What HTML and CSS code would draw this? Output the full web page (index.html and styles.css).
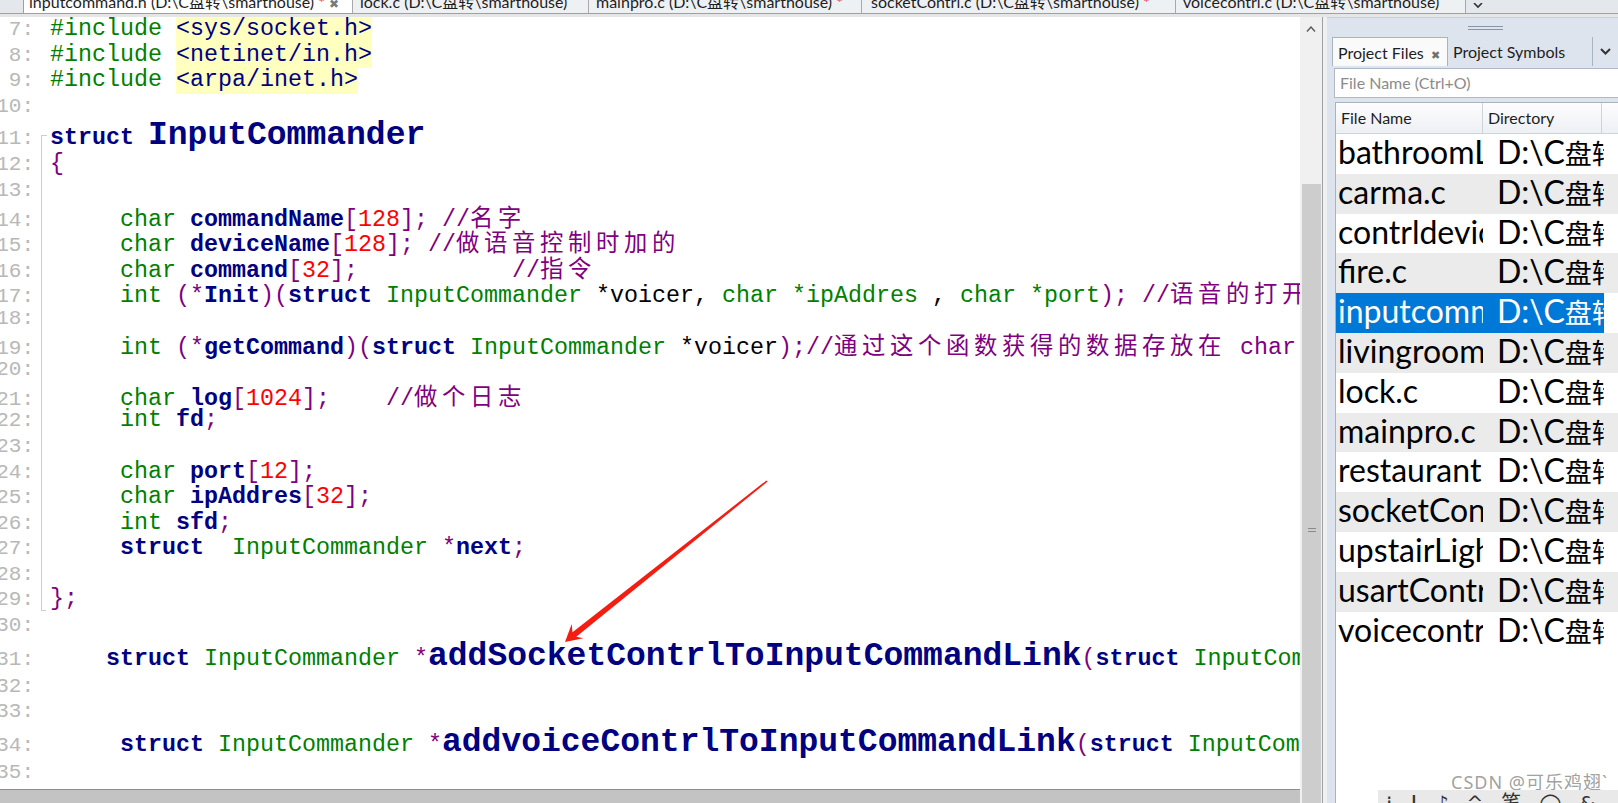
FILE: index.html
```html
<!DOCTYPE html>
<html lang="zh">
<head>
    <meta charset="UTF-8">
    <meta name="viewport" content="width=device-width, initial-scale=1.0">
    <title>inputcommand.h - smarthouse</title>
    <link rel="stylesheet" href="styles.css">
</head>
<body>
    <div class="tabbar">
        <div class="tab active"><span class="lbl">inputcommand.h (D:\C盘转\smarthouse) <span class="mod">*</span> <span class="close">✖</span></span></div>
        <div class="tab"><span class="lbl">lock.c (D:\C盘转\smarthouse)</span></div>
        <div class="tab"><span class="lbl">mainpro.c (D:\C盘转\smarthouse) <span class="mod">*</span></span></div>
        <div class="tab"><span class="lbl">socketContrl.c (D:\C盘转\smarthouse) <span class="mod">*</span></span></div>
        <div class="tab"><span class="lbl">voicecontrl.c (D:\C盘转\smarthouse)</span></div>
        <div class="tab-menu"><svg width="10" height="6" viewBox="0 0 10 6"><polyline points="1,0 5,4 9,0" fill="none" stroke="#333" stroke-width="1.6"/></svg></div>
    </div>
    <div class="tabline"></div>

    <div class="main">
        <div class="editor">
            <div class="code">
                <div class="line"><span class="num">7:</span><span class="fold"></span><span class="src"><span class="pp">#include</span> <span class="hd">&lt;sys/socket.h&gt;</span></span></div>
                <div class="line"><span class="num">8:</span><span class="fold"></span><span class="src"><span class="pp">#include</span> <span class="hd">&lt;netinet/in.h&gt;</span></span></div>
                <div class="line"><span class="num">9:</span><span class="fold"></span><span class="src"><span class="pp">#include</span> <span class="hd">&lt;arpa/inet.h&gt;</span></span></div>
                <div class="line"><span class="num">10:</span><span class="fold"></span><span class="src"> </span></div>
                <div class="line big11"><span class="num">11:</span><span class="fold top"></span><span class="src"><span class="kw">struct</span> <span class="fn">InputCommander</span></span></div>
                <div class="line"><span class="num">12:</span><span class="fold mid"></span><span class="src"><span class="pu">{</span></span></div>
                <div class="line"><span class="num">13:</span><span class="fold mid"></span><span class="src"> </span></div>
                <div class="line"><span class="num">14:</span><span class="fold mid"></span><span class="src">     <span class="ty">char</span> <span class="id">commandName</span><span class="pu">[</span><span class="nu">128</span><span class="pu">];</span> <span class="cm">//<span class="zh">名字</span></span></span></div>
                <div class="line"><span class="num">15:</span><span class="fold mid"></span><span class="src">     <span class="ty">char</span> <span class="id">deviceName</span><span class="pu">[</span><span class="nu">128</span><span class="pu">];</span> <span class="cm">//<span class="zh">做语音控制时加的</span></span></span></div>
                <div class="line"><span class="num">16:</span><span class="fold mid"></span><span class="src">     <span class="ty">char</span> <span class="id">command</span><span class="pu">[</span><span class="nu">32</span><span class="pu">];</span>           <span class="cm">//<span class="zh">指令</span></span></span></div>
                <div class="line"><span class="num">17:</span><span class="fold mid"></span><span class="src">     <span class="ty">int</span> <span class="pu">(*</span><span class="id">Init</span><span class="pu">)(</span><span class="kw">struct</span> <span class="tn">InputCommander</span> *voicer, <span class="ty">char</span> <span class="tn">*ipAddres</span> , <span class="ty">char</span> <span class="tn">*port</span><span class="pu">);</span> <span class="cm">//<span class="zh">语音的打开</span></span></span></div>
                <div class="line"><span class="num">18:</span><span class="fold mid"></span><span class="src"> </span></div>
                <div class="line"><span class="num">19:</span><span class="fold mid"></span><span class="src">     <span class="ty">int</span> <span class="pu">(*</span><span class="id">getCommand</span><span class="pu">)(</span><span class="kw">struct</span> <span class="tn">InputCommander</span> *voicer<span class="pu">);</span><span class="cm">//<span class="zh">通过这个函数获得的数据存放在</span> char</span></span></div>
                <div class="line"><span class="num">20:</span><span class="fold mid"></span><span class="src"> </span></div>
                <div class="line"><span class="num">21:</span><span class="fold mid"></span><span class="src">     <span class="ty">char</span> <span class="id">log</span><span class="pu">[</span><span class="nu">1024</span><span class="pu">];</span>    <span class="cm">//<span class="zh">做个日志</span></span></span></div>
                <div class="line"><span class="num">22:</span><span class="fold mid"></span><span class="src">     <span class="ty">int</span> <span class="id">fd</span><span class="pu">;</span></span></div>
                <div class="line"><span class="num">23:</span><span class="fold mid"></span><span class="src"> </span></div>
                <div class="line"><span class="num">24:</span><span class="fold mid"></span><span class="src">     <span class="ty">char</span> <span class="id">port</span><span class="pu">[</span><span class="nu">12</span><span class="pu">];</span></span></div>
                <div class="line"><span class="num">25:</span><span class="fold mid"></span><span class="src">     <span class="ty">char</span> <span class="id">ipAddres</span><span class="pu">[</span><span class="nu">32</span><span class="pu">];</span></span></div>
                <div class="line"><span class="num">26:</span><span class="fold mid"></span><span class="src">     <span class="ty">int</span> <span class="id">sfd</span><span class="pu">;</span></span></div>
                <div class="line"><span class="num">27:</span><span class="fold mid"></span><span class="src">     <span class="kw">struct</span>  <span class="tn">InputCommander</span> <span class="pu">*</span><span class="id">next</span><span class="pu">;</span></span></div>
                <div class="line"><span class="num">28:</span><span class="fold mid"></span><span class="src"> </span></div>
                <div class="line"><span class="num">29:</span><span class="fold end"></span><span class="src"><span class="pu">};</span></span></div>
                <div class="line"><span class="num">30:</span><span class="fold"></span><span class="src"> </span></div>
                <div class="line big"><span class="num">31:</span><span class="fold"></span><span class="src">    <span class="kw">struct</span> <span class="tn">InputCommander</span> <span class="pu">*</span><span class="fn">addSocketContrlToInputCommandLink</span><span class="pu">(</span><span class="kw">struct</span> <span class="tn">InputCommander</span> *phead<span class="pu">);</span></span></div>
                <div class="line"><span class="num">32:</span><span class="fold"></span><span class="src"> </span></div>
                <div class="line"><span class="num">33:</span><span class="fold"></span><span class="src"> </span></div>
                <div class="line big"><span class="num">34:</span><span class="fold"></span><span class="src">     <span class="kw">struct</span> <span class="tn">InputCommander</span> <span class="pu">*</span><span class="fn">addvoiceContrlToInputCommandLink</span><span class="pu">(</span><span class="kw">struct</span> <span class="tn">InputCommander</span> *phead<span class="pu">);</span></span></div>
                <div class="line"><span class="num">35:</span><span class="fold"></span><span class="src"> </span></div>
            </div>
            <div class="vscroll">
                <div class="vs-up"><svg width="10" height="6" viewBox="0 0 10 6"><polyline points="1,5.5 5,1 9,5.5" fill="none" stroke="#5a5a5a" stroke-width="1.4"/></svg></div>
                <div class="vs-thumb"><span class="grip-line"></span><span class="grip-line"></span></div>
            </div>
            <div class="hscroll"></div>
        </div>

        <div class="splitter"></div>

        <div class="panel">
            <div class="panel-grip"><span></span><span></span></div>
            <div class="ptabs">
                <div class="ptab on">Project Files <span class="ptab-x">✖</span></div>
                <div class="ptab">Project Symbols</div>
                <div class="ptab-drop"><svg width="11" height="7" viewBox="0 0 11 7"><polyline points="1,1 5.5,5.5 10,1" fill="none" stroke="#333" stroke-width="2"/></svg></div>
            </div>
            <div class="search">File Name (Ctrl+O)</div>
            <div class="list">
                <div class="lhead"><div class="c1">File Name</div><div class="c2">Directory</div><div class="c3"></div></div>
                <div class="row"><div class="c1">bathroomLight.c</div><div class="c2">D:\C<span class="dz">盘转</span>\smarthouse</div></div>
                <div class="row alt"><div class="c1">carma.c</div><div class="c2">D:\C<span class="dz">盘转</span>\smarthouse</div></div>
                <div class="row"><div class="c1">contrldevices.h</div><div class="c2">D:\C<span class="dz">盘转</span>\smarthouse</div></div>
                <div class="row alt"><div class="c1">fire.c</div><div class="c2">D:\C<span class="dz">盘转</span>\smarthouse</div></div>
                <div class="row sel"><div class="c1">inputcommand.h</div><div class="c2">D:\C<span class="dz">盘转</span>\smarthouse</div></div>
                <div class="row alt"><div class="c1">livingroomLight.c</div><div class="c2">D:\C<span class="dz">盘转</span>\smarthouse</div></div>
                <div class="row"><div class="c1">lock.c</div><div class="c2">D:\C<span class="dz">盘转</span>\smarthouse</div></div>
                <div class="row alt"><div class="c1">mainpro.c</div><div class="c2">D:\C<span class="dz">盘转</span>\smarthouse</div></div>
                <div class="row"><div class="c1">restaurantLight.c</div><div class="c2">D:\C<span class="dz">盘转</span>\smarthouse</div></div>
                <div class="row alt"><div class="c1">socketContrl.c</div><div class="c2">D:\C<span class="dz">盘转</span>\smarthouse</div></div>
                <div class="row"><div class="c1">upstairLight.c</div><div class="c2">D:\C<span class="dz">盘转</span>\smarthouse</div></div>
                <div class="row alt"><div class="c1">usartContrl.c</div><div class="c2">D:\C<span class="dz">盘转</span>\smarthouse</div></div>
                <div class="row"><div class="c1">voicecontrl.c</div><div class="c2">D:\C<span class="dz">盘转</span>\smarthouse</div></div>
            </div>
        </div>
    </div>

    <!-- red annotation arrow -->
    <svg class="arrow" width="1618" height="803" viewBox="0 0 1618 803">
        <polygon points="565,642 583.3,638.3 576.3,636.8 767.6,481.6 766.5,480.4 572.5,632.2 571.7,624" fill="#f51d12"/>
    </svg>

    <div class="watermark">CSDN @可乐鸡翅`</div>
    <div class="mini-toolbar"><span>⁞</span><span class="bar">|</span><span>♪</span><span>^</span><span>笔</span><span>◯</span><span>&amp;</span></div>
</body>
</html>
```

FILE: styles.css
```css
body {
    margin: 0;
    width: 1618px;
    height: 803px;
    overflow: hidden;
    position: relative;
    background: #fff;
    font-family: 'Lato', 'Noto Sans CJK SC', sans-serif;
    color: #1e1e1e;
}

/* top file tabs */
.tabbar {
    display: flex;
    height: 13px;
    padding-left: 23px;
    background: #e4e7eb;
    border-bottom: 1px solid #a0a0a0;
    overflow: hidden;
}
.tab {
    height: 13px;
    box-sizing: border-box;
    padding-left: 7px;
    background: #eef1f4;
    border-right: 1px solid #a9a9a9;
    font-size: 16px;
    white-space: nowrap;
    overflow: hidden;
}
.tab .lbl {
    display: block;
    margin-top: -6px;
    line-height: 16px;
}
.tab.active {
    width: 330px;
    padding-left: 5px;
    background: #fff;
    border-left: 1px solid #a0a0a0;
}
.tab:nth-child(2) { width: 236px; }
.tab:nth-child(3) { width: 273px; }
.tab:nth-child(4) { width: 314px; padding-left: 9px; }
.tab:nth-child(5) { width: 290px; }
.mod { color: #e53935; }
.close { color: #7a7a7a; font-size: 12px; }
.tab-menu {
    padding-left: 7px;
    line-height: 6px;
}
.tabline {
    height: 3px;
    background: #e6e6e6;
}

.main {
    display: flex;
    height: 786px;
}

/* editor */
.editor {
    display: grid;
    grid-template-columns: 1300px 22px;
    grid-template-rows: 772px 14px;
    width: 1322px;
    flex: none;
}
.code {
    grid-column: 1;
    grid-row: 1;
    overflow: hidden;
    background: #fff;
}
.line {
    display: flex;
    align-items: baseline;
    height: 25.6px;
    line-height: 25.6px;
}
.line.big11 { height: 33px; line-height: 33px; }
.line.big { height: 35px; line-height: 35px; }
.num {
    display: flex;
    justify-content: flex-end;
    flex: none;
    width: 34px;
    padding-right: 7px;
    font-family: 'Liberation Mono', monospace;
    font-size: 21px;
    color: #b8b8b8;
}
.fold {
    flex: none;
    width: 9px;
    align-self: stretch;
}
.fold.top {
    background:
        linear-gradient(#cdcdcd, #cdcdcd) 0 100% / 1px 50% no-repeat,
        linear-gradient(#cdcdcd, #cdcdcd) 0 50% / 6px 1px no-repeat;
}
.fold.mid {
    background: linear-gradient(#cdcdcd, #cdcdcd) 0 0 / 1px 100% no-repeat;
}
.fold.end {
    background:
        linear-gradient(#cdcdcd, #cdcdcd) 0 0 / 1px 24px no-repeat,
        linear-gradient(#cdcdcd, #cdcdcd) 0 23px / 5px 1px no-repeat;
}
.src {
    white-space: pre;
    font-family: 'Liberation Mono', 'Noto Sans CJK SC', monospace;
    font-size: 23.33px;
    color: #000;
}
.pp { color: #008000; }
.hd { display: inline-block; background: #ffffc0; color: #000080; }
.kw { color: #000080; font-weight: bold; }
.ty { color: #008000; }
.tn { color: #008000; }
.id { color: #000080; font-weight: bold; }
.pu { color: #800080; }
.nu { color: #ff0000; }
.cm { color: #800080; }
.zh {
    font-family: 'Noto Sans CJK SC', sans-serif;
    letter-spacing: 4.67px;
}
.fn {
    font-size: 33px;
    font-weight: bold;
    color: #000080;
}

.vscroll {
    grid-column: 2;
    grid-row: 1 / span 2;
    display: flex;
    flex-direction: column;
    background: #f0f0f0;
}
.vs-up {
    height: 23px;
    margin-bottom: 144px;
    display: flex;
    align-items: center;
    justify-content: center;
}
.vs-thumb {
    flex: 1;
    margin: 0 1px 0 2px;
    background: #cdcdcd;
    display: flex;
    flex-direction: column;
    align-items: center;
    gap: 2px;
    padding-top: 344px;
}
.grip-line {
    width: 8px;
    height: 1px;
    background: #8a8a8a;
}
.hscroll {
    grid-column: 1;
    grid-row: 2;
    background: #c3c3c3;
    border-top: 1px solid #8e8e8e;
}

.splitter {
    width: 4px;
    flex: none;
    background: #eef0f2;
    border-left: 1px solid #a0a0a0;
}

/* project panel */
.panel {
    flex: 1;
    display: flex;
    flex-direction: column;
    padding-left: 5px;
    background: #dde4ed;
    border-top: 1px solid #c8d0da;
}
.panel-grip {
    height: 19px;
    display: flex;
    flex-direction: column;
    justify-content: center;
    align-items: center;
    gap: 2px;
    padding-left: 20px;
}
.panel-grip span {
    width: 35px;
    height: 1px;
    background: #8796a8;
}
.ptabs {
    display: flex;
    height: 29px;
}
.ptab {
    box-sizing: border-box;
    height: 29px;
    padding: 2px 0 0 5px;
    line-height: 26px;
    font-size: 16px;
    white-space: nowrap;
}
.ptab.on {
    width: 116px;
    padding-left: 5px;
    background: #fafafa;
    border: 1px solid #a8b4c2;
    border-bottom: none;
}
.ptab-x {
    font-size: 11px;
    color: #6f6f6f;
    padding-left: 3px;
}
.ptab:nth-child(2) {
    width: 145px;
    border-right: 1px solid #a8b4c2;
}
.ptab-drop {
    flex: 1;
    display: flex;
    align-items: center;
    padding-left: 7px;
}
.search {
    margin: 2px 0 0 2px;
    height: 30px;
    box-sizing: border-box;
    padding-left: 5px;
    line-height: 28px;
    font-size: 16px;
    color: #8b8b8b;
    background: #fff;
    border: 1px solid #afb9c5;
    border-right: none;
}
.list {
    flex: 1;
    margin: 4px 0 0 3px;
    background: #fff;
    border-left: 1px solid #a9b3bf;
    border-top: 1px solid #a9b3bf;
}
.lhead {
    display: flex;
    height: 30px;
    line-height: 30px;
    font-size: 16px;
    background: linear-gradient(#fdfdfe, #edf0f4);
    border-bottom: 1px solid #cdd3db;
}
.lhead .c1 {
    width: 141px;
    padding-left: 5px;
    border-right: 1px solid #cdd3db;
}
.lhead .c2 {
    width: 113px;
    padding-left: 5px;
    border-right: 1px solid #cdd3db;
}
.row {
    display: flex;
    height: 39.8px;
    line-height: 36px;
    font-size: 32px;
    color: #000;
}
.row .c1, .row .c2 {
    white-space: nowrap;
    overflow: hidden;
    box-sizing: border-box;
}
.row .c1 { width: 147px; padding-left: 2px; }
.row .c2 { width: 121px; padding-left: 14px; }
.row .dz { font-size: 27px; }
.row.alt { background: #ebebeb; }
.row.sel .c1, .row.sel .c2 {
    background: #0078d7;
    color: #fff;
}

/* overlays */
.arrow {
    position: absolute;
    left: 0;
    top: 0;
    pointer-events: none;
}
.watermark {
    position: absolute;
    left: 1451px;
    top: 773px;
    font-family: 'Noto Sans', 'Noto Sans CJK SC', sans-serif;
    font-size: 18px;
    line-height: 18px;
    letter-spacing: 1px;
    color: rgba(135, 135, 135, 0.8);
    white-space: nowrap;
}
.mini-toolbar {
    position: absolute;
    left: 1378px;
    top: 790px;
    width: 240px;
    height: 13px;
    overflow: hidden;
    display: flex;
    gap: 18px;
    padding-left: 8px;
    box-sizing: border-box;
    background: #e9e9e9;
    font-family: 'DejaVu Sans', 'Noto Sans CJK SC', sans-serif;
    font-size: 20px;
    line-height: 26px;
    color: #333;
}
.mini-toolbar .bar { font-weight: bold; }
```
